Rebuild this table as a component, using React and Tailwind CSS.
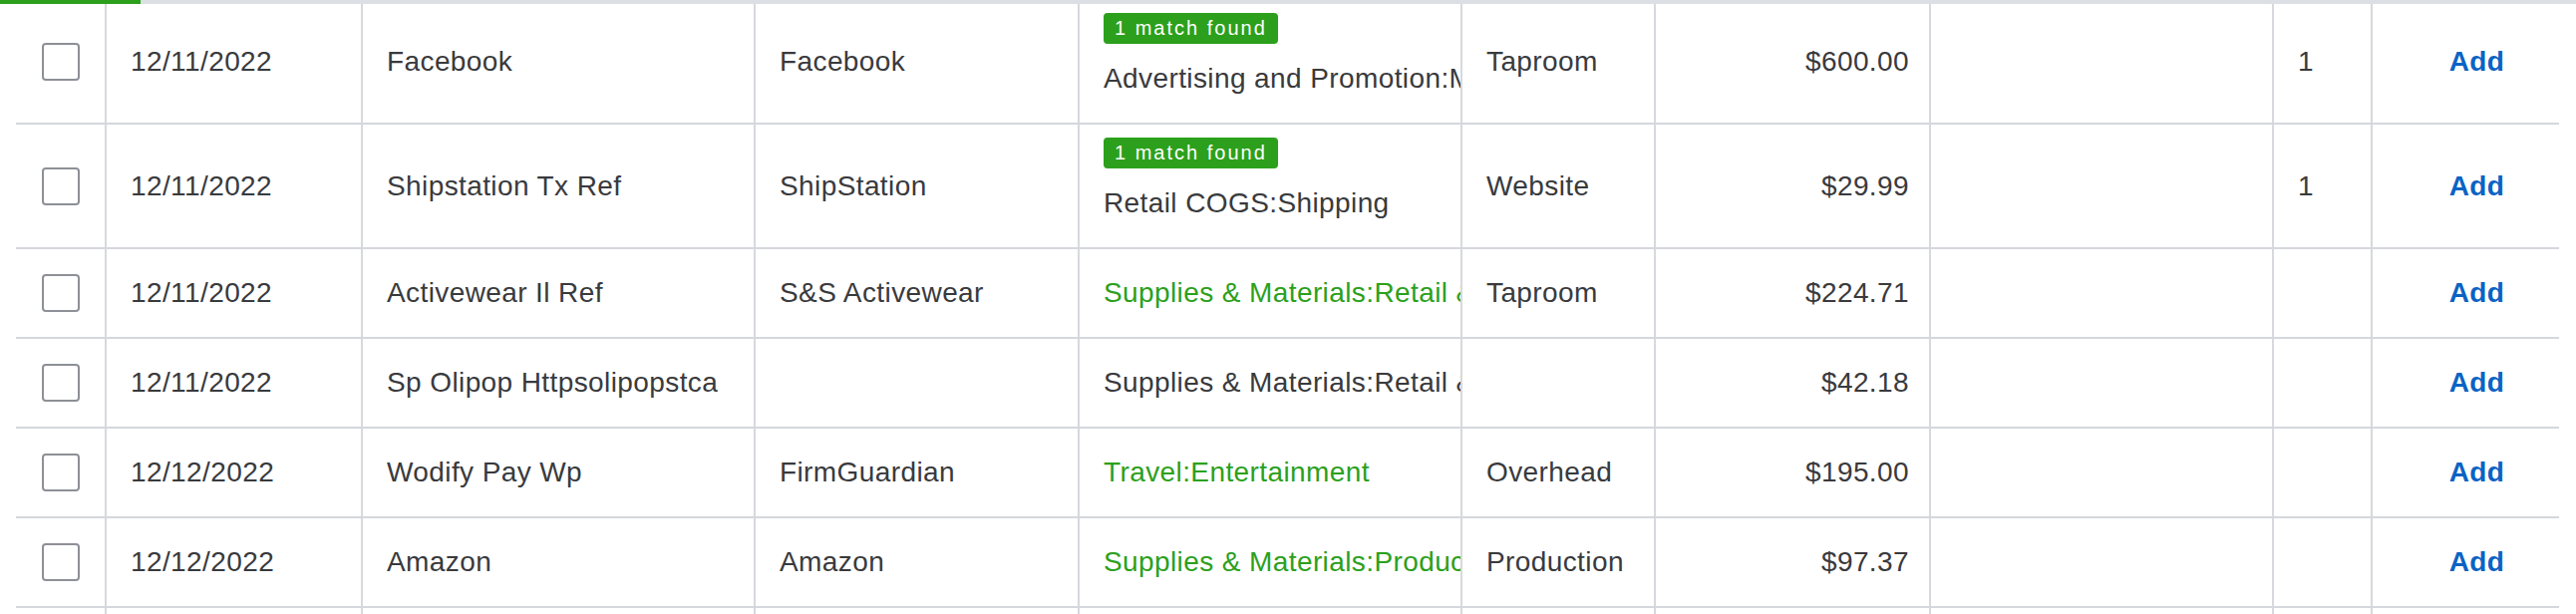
import React from "react";

const rows = [
  { date: "12/11/2022", desc: "Facebook", payee: "Facebook", cat: "Advertising and Promotion:Marketing", match: true, green: false, loc: "Taproom", amt: "$600.00", n: "1" },
  { date: "12/11/2022", desc: "Shipstation Tx Ref", payee: "ShipStation", cat: "Retail COGS:Shipping", match: true, green: false, loc: "Website", amt: "$29.99", n: "1" },
  { date: "12/11/2022", desc: "Activewear Il Ref", payee: "S&S Activewear", cat: "Supplies & Materials:Retail & Merchandise", match: false, green: true, loc: "Taproom", amt: "$224.71", n: "" },
  { date: "12/11/2022", desc: "Sp Olipop Httpsolipopstca", payee: "", cat: "Supplies & Materials:Retail & Merchandise", match: false, green: false, loc: "", amt: "$42.18", n: "" },
  { date: "12/12/2022", desc: "Wodify Pay Wp", payee: "FirmGuardian", cat: "Travel:Entertainment", match: false, green: true, loc: "Overhead", amt: "$195.00", n: "" },
  { date: "12/12/2022", desc: "Amazon", payee: "Amazon", cat: "Supplies & Materials:Production", match: false, green: true, loc: "Production", amt: "$97.37", n: "" },
];

function Row({ r, idx }) {
  const h = idx === 0 ? "h-[121px]" : idx === 1 ? "h-[125px]" : "h-[90px]";
  const adj = idx === 0 ? "pb-[4px]" : "";
  const cell = `flex shrink-0 items-center border-r-2 border-[#d6d9dd] ${adj}`;
  return (
    <div className={`flex ${h} border-b-2 border-[#d4d7dc]`}>
      <div className={`${cell} w-[91px] justify-center`}>
        <div className="w-[38px] h-[38px] rounded-[4px] border-2 border-[#8d9096] bg-white" />
      </div>
      <div className={`${cell} w-[257px] pl-6`}>{r.date}</div>
      <div className={`${cell} w-[394px] pl-6 whitespace-nowrap overflow-hidden`}>{r.desc}</div>
      <div className={`${cell} w-[325px] pl-6 whitespace-nowrap overflow-hidden`}>{r.payee}</div>
      {r.match ? (
        <div className={`flex shrink-0 flex-col border-r-2 border-[#d6d9dd] w-[384px] pl-6 overflow-hidden ${idx === 0 ? "pt-[9px]" : "pt-[13px]"}`}>
          <div className="self-start h-[31px] px-[11px] rounded-[4px] bg-[#2ca01c] text-white text-[20px] leading-[31px] tracking-[2px] whitespace-nowrap">
            1 match found
          </div>
          <div className="mt-[14px] leading-[42px] whitespace-nowrap">{r.cat}</div>
        </div>
      ) : (
        <div className={`${cell} w-[384px] pl-6 whitespace-nowrap overflow-hidden ${r.green ? "text-[#2ca01c]" : ""}`}>{r.cat}</div>
      )}
      <div className={`${cell} w-[194px] pl-6 whitespace-nowrap overflow-hidden`}>{r.loc}</div>
      <div className={`${cell} w-[276px] pr-5 justify-end`}>{r.amt}</div>
      <div className={`${cell} w-[344px]`} />
      <div className={`${cell} w-[99px] pl-6`}>{r.n}</div>
      <div className={`flex shrink-0 items-center w-[187px] pl-[22px] justify-center font-bold text-[#0b63c4] ${adj}`}>Add</div>
    </div>
  );
}

export default function App() {
  return (
    <div className="w-[2584px] h-[616px] overflow-hidden bg-white font-['Liberation_Sans',Arial,sans-serif] text-[28px] tracking-[0.4px] text-[#393a3d]">
      <div className="h-[4px] bg-[#dcdfe3]">
        <div className="h-full w-[141px] bg-[#2ca01c]" />
      </div>
      <div className="ml-[16px] w-[2551px]">
        {rows.map((r, i) => (
          <Row key={i} r={r} idx={i} />
        ))}
        <div className="flex h-[40px]">
          <div className="shrink-0 w-[91px] border-r-2 border-[#d6d9dd]" />
          <div className="shrink-0 w-[257px] border-r-2 border-[#d6d9dd]" />
          <div className="shrink-0 w-[394px] border-r-2 border-[#d6d9dd]" />
          <div className="shrink-0 w-[325px] border-r-2 border-[#d6d9dd]" />
          <div className="shrink-0 w-[384px] border-r-2 border-[#d6d9dd]" />
          <div className="shrink-0 w-[194px] border-r-2 border-[#d6d9dd]" />
          <div className="shrink-0 w-[276px] border-r-2 border-[#d6d9dd]" />
          <div className="shrink-0 w-[344px] border-r-2 border-[#d6d9dd]" />
          <div className="shrink-0 w-[99px] border-r-2 border-[#d6d9dd]" />
          <div className="shrink-0 w-[187px]" />
        </div>
      </div>
    </div>
  );
}
